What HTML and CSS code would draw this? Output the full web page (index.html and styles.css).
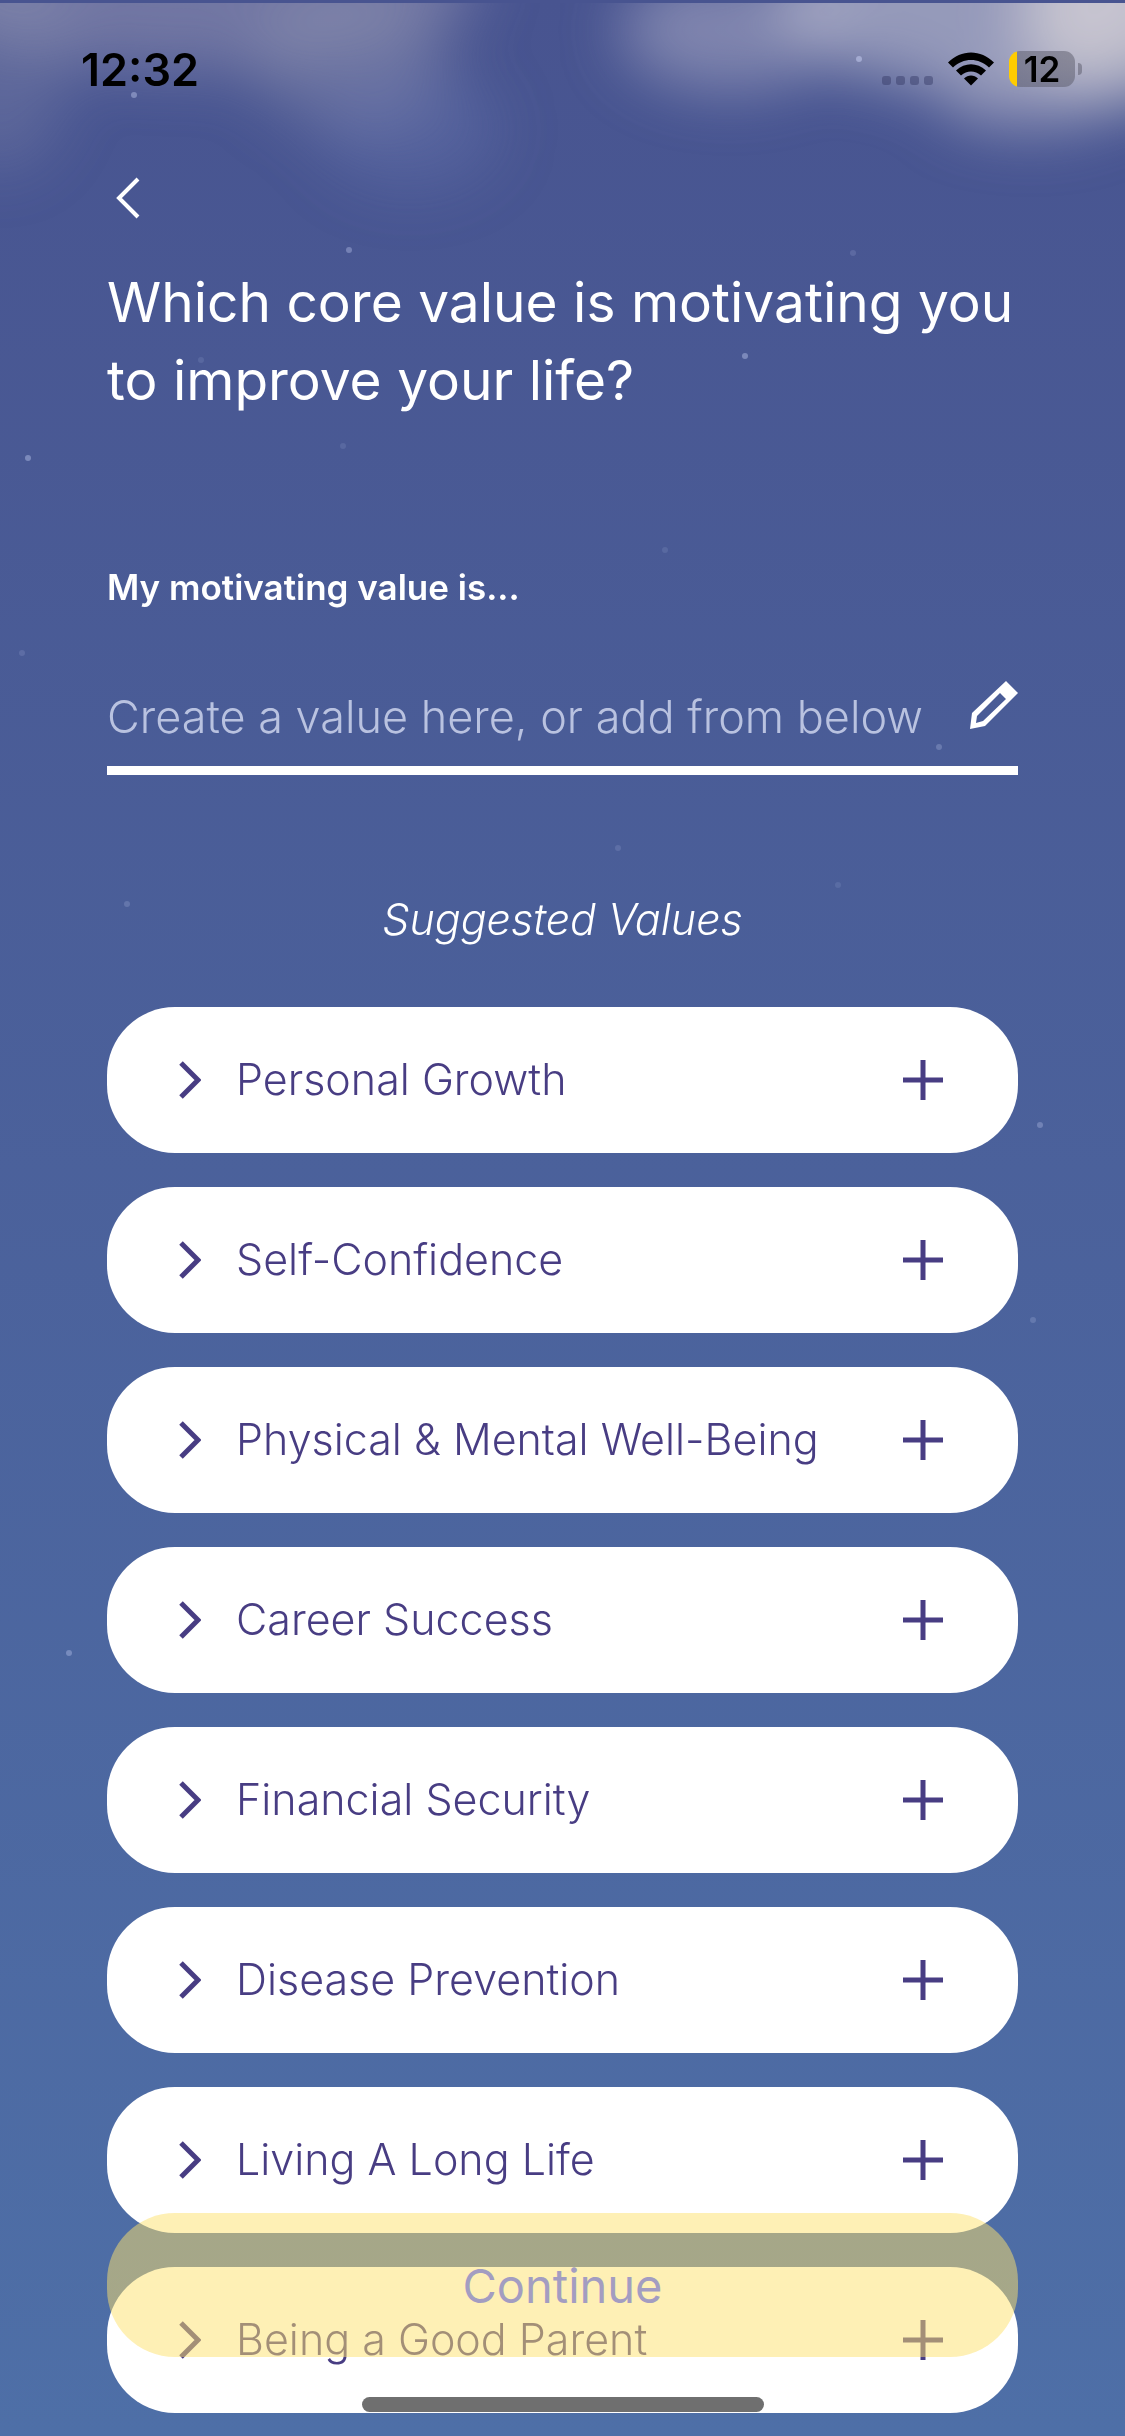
FILE: index.html
```html
<!DOCTYPE html>
<html lang="en">
<head>
    <meta charset="UTF-8">
    <meta name="viewport" content="width=device-width, initial-scale=1.0">
    <title>Core Value</title>
    <link rel="stylesheet" href="styles.css">
</head>
<body>

    <!-- Night sky -->
    <svg class="sky" viewBox="0 0 1125 2436" preserveAspectRatio="xMidYMin slice" aria-hidden="true">
        <defs>
            <filter id="soft" x="-50%" y="-50%" width="200%" height="200%">
                <feGaussianBlur stdDeviation="30"/>
            </filter>
            <clipPath id="skyEdge"><rect x="0" y="3" width="1125" height="2433"/></clipPath>
        </defs>
        <g clip-path="url(#skyEdge)">
            <g filter="url(#soft)">
                <ellipse cx="200" cy="-20" rx="280" ry="90" fill="#a3a2bb" opacity=".45"/>
                <ellipse cx="350" cy="60" rx="100" ry="70" fill="#a3a2bb" opacity=".3"/>
                <ellipse cx="0" cy="60" rx="70" ry="110" fill="#a3a2bb" opacity=".22"/>
                <ellipse cx="410" cy="130" rx="90" ry="60" fill="#7f8cc4" opacity=".22"/>
                <ellipse cx="730" cy="30" rx="110" ry="60" fill="#c3c2d2" opacity=".45"/>
                <ellipse cx="980" cy="0" rx="200" ry="90" fill="#d6d3dc" opacity=".55"/>
                <ellipse cx="1030" cy="100" rx="90" ry="30" fill="#c3c2d2" opacity=".5"/>
                <ellipse cx="1130" cy="10" rx="110" ry="90" fill="#e0dbdc" opacity=".65"/>
            </g>
        </g>
        <g class="stars" id="stars"></g>
    </svg>

    <header class="status-bar">
        <span class="time">12:32</span>
        <div class="status-icons">
            <span class="signal"><i></i><i></i><i></i><i></i></span>
            <svg class="wifi" viewBox="0 0 46 34" aria-hidden="true">
                <path d="M0 10.5C13-3 33-3 46 10.5L41 15.500C31 5.500 15 5.500 5 15.500Z"/>
                <path d="M8 18.500C17 10 29 10 38 18.500L33 23.500C27 18 19 18 13 23.500Z"/>
                <path d="M16 26.500C20 22.500 26 22.500 30 26.500L23 33.500Z"/>
            </svg>
            <span class="battery">12</span>
        </div>
    </header>

    <main class="screen">
        <button class="back-btn" aria-label="Back">
            <svg viewBox="0 0 24 42"><path d="M22 2L3 21L22 40"/></svg>
        </button>

        <h1>Which core value is motivating you to improve your life?</h1>

        <label for="valueInput">My motivating value is...</label>
        <div class="value-field">
            <input type="text" id="valueInput" placeholder="Create a value here, or add from below">
            <svg class="pencil" viewBox="0 0 48 48" aria-hidden="true">
                <path fill-rule="evenodd" d="M36 0L48 12L15 45L0 48L2 32ZM30 12L7 35L6 42L13 40L36 18Z"/>
            </svg>
        </div>

        <h2>Suggested Values</h2>
        <ul class="value-list" id="valueList"></ul>
    </main>

    <button class="continue-btn" disabled>Continue</button>
    <div class="home-indicator"></div>

    <script>
        const values = [
            "Personal Growth",
            "Self-Confidence",
            "Physical & Mental Well-Being",
            "Career Success",
            "Financial Security",
            "Disease Prevention",
            "Living A Long Life",
            "Being a Good Parent"
        ];

        // x, y, opacity
        const stars = [
            [134, 95, 0.4], [859, 59, 0.5], [349, 250, 0.35], [853, 253, 0.15],
            [201, 360, 0.12], [745, 356, 0.4], [28, 458, 0.4], [343, 446, 0.12],
            [665, 550, 0.12], [22, 653, 0.15], [939, 747, 0.25], [618, 848, 0.15],
            [838, 885, 0.12], [127, 904, 0.2], [1040, 1125, 0.3], [1033, 1320, 0.2],
            [69, 1653, 0.35]
        ];

        function populateValues() {
            const list = document.getElementById("valueList");

            values.forEach((value) => {
                const item = document.createElement("li");

                item.innerHTML = `
                    <button class="expand-btn">
                        <svg viewBox="0 0 22 38"><path d="M2 2L19 19L2 36"/></svg>
                        <span></span>
                    </button>
                    <button class="add-btn">
                        <svg viewBox="0 0 40 40"><path d="M20 0V40M0 20H40"/></svg>
                    </button>
                `;
                item.querySelector("span").textContent = value;
                item.querySelector(".add-btn").setAttribute("aria-label", "Add " + value);

                list.appendChild(item);
            });
        }

        function drawStars() {
            document.getElementById("stars").innerHTML = stars
                .map(([x, y, opacity]) => `<circle cx="${x}" cy="${y}" r="3" opacity="${opacity}"/>`)
                .join("");
        }

        populateValues();
        drawStars();
    </script>

</body>
</html>
```
FILE: styles.css
```css
* {
    box-sizing: border-box;
}
body {
    margin: 0;
    min-height: 100vh;
    position: relative;
    font-family: Inter, sans-serif;
    color: white;
    background: linear-gradient(#485490, #4e6fa7);
    overflow-x: hidden;
}
button {
    border: none;
    padding: 0;
    background: none;
    font-family: inherit;
    color: inherit;
    cursor: pointer;
}
/* Background */
.sky {
    position: absolute;
    top: 0;
    left: 0;
    width: 100%;
    height: 100%;
    z-index: -1;
}
.stars {
    fill: #c9d2f5;
}
/* Status bar */
.status-bar {
    display: flex;
    justify-content: space-between;
    align-items: center;
    height: 138px;
    padding: 0 43px 0 81px;
    font-weight: 600;
    color: black;
}
.time {
    font-size: 45px;
}
.status-icons {
    display: flex;
    align-items: center;
    gap: 15px;
}
.signal {
    display: flex;
    gap: 5px;
    align-self: flex-end;
    padding-bottom: 2px;
}
.signal i {
    width: 9px;
    height: 9px;
    border-radius: 3px;
    background: rgba(50, 55, 100, 0.45);
}
.wifi {
    width: 46px;
    height: 34px;
}
.battery {
    position: relative;
    width: 66px;
    height: 36px;
    margin-right: 7px;
    border-radius: 11px;
    background: linear-gradient(to right, #ffcc00 8px, rgba(90, 90, 105, 0.5) 8px);
    font-size: 35px;
    line-height: 36px;
    text-align: center;
}
.battery::after {
    content: "";
    position: absolute;
    right: -7px;
    top: 12px;
    width: 4px;
    height: 12px;
    border-radius: 0 4px 4px 0;
    background: rgba(90, 90, 105, 0.5);
}
/* Content */
.screen {
    padding: 39px 107px 22px;
}
.back-btn {
    display: block;
    padding-left: 9px;
}
.back-btn svg {
    display: block;
    width: 24px;
    height: 42px;
    fill: none;
    stroke: white;
    stroke-width: 4;
}
h1 {
    margin: 44px 0 0;
    font-size: 55px;
    font-weight: 400;
    line-height: 78px;
}
label {
    display: block;
    margin-top: 144px;
    font-size: 35px;
    font-weight: 600;
    line-height: 48px;
}
.value-field {
    display: flex;
    align-items: flex-start;
    margin-top: 70px;
    height: 94px;
    border-bottom: 9px solid white;
}
.value-field input {
    flex: 1;
    min-width: 0;
    height: 70px;
    padding: 0;
    border: none;
    outline: none;
    background: none;
    font-family: inherit;
    font-size: 45px;
    font-weight: 300;
    color: white;
}
.value-field input::placeholder {
    color: #b9c2e0;
}
.pencil {
    width: 48px;
    height: 48px;
    fill: white;
}
h2 {
    margin: 114px 0 58px;
    font-size: 43px;
    font-style: italic;
    font-weight: 300;
    line-height: 60px;
    text-align: center;
}
.value-list {
    display: flex;
    flex-direction: column;
    gap: 34px;
    margin: 0;
    padding: 0;
    list-style: none;
    color: #483d83;
}
.value-list li {
    display: flex;
    height: 146px;
    border-radius: 68px;
    background: white;
}
.value-list svg {
    fill: none;
    stroke: #483d83;
    stroke-width: 5;
}
.expand-btn {
    flex: 1;
    display: flex;
    align-items: center;
    gap: 35px;
    padding-left: 72px;
    font-size: 43px;
    font-weight: 300;
}
.expand-btn span {
    padding-bottom: 3px;
}
.expand-btn svg {
    width: 22px;
    height: 38px;
}
.add-btn {
    padding: 0 75px;
}
.add-btn svg {
    display: block;
    width: 40px;
    height: 40px;
}
/* Floating footer */
.continue-btn {
    position: fixed;
    left: 107px;
    right: 107px;
    bottom: 79px;
    height: 144px;
    border-radius: 68px;
    background: #fde16d;
    opacity: 0.5;
    font-size: 47px;
    color: #483d83;
}
.home-indicator {
    position: fixed;
    left: 50%;
    bottom: 24px;
    width: 402px;
    height: 15px;
    margin-left: -201px;
    border-radius: 8px;
    background: #6f6f6f;
}
```
